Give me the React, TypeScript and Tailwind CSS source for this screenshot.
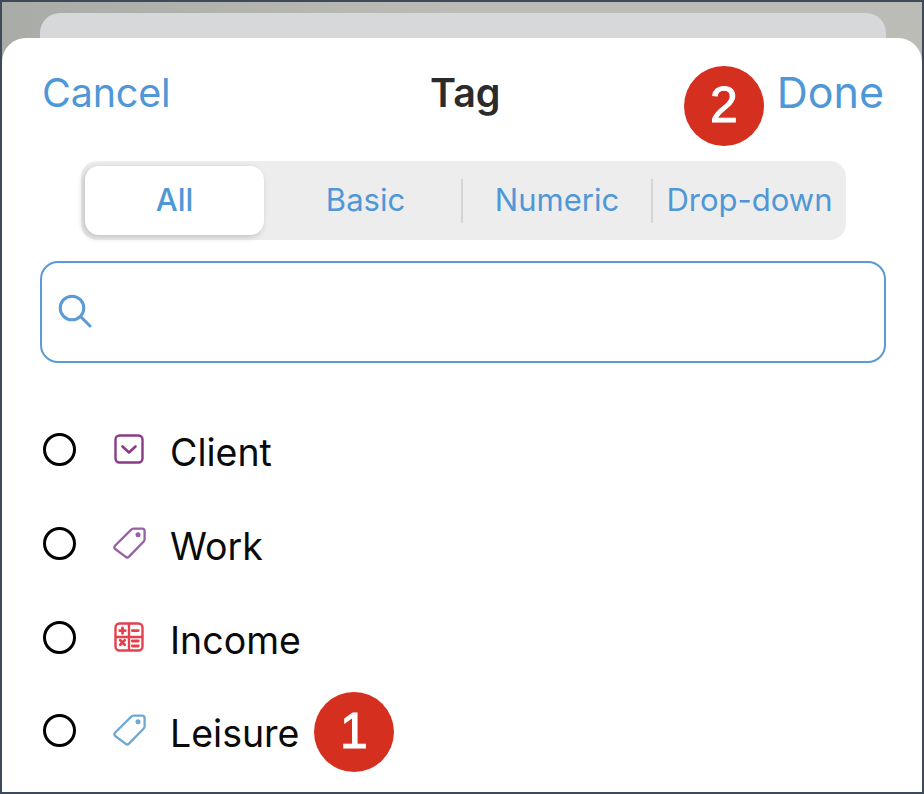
const BLUE = 'text-[#4f97d7]'

function ChevronBoxIcon() {
  return (
    <svg width="30" height="30" viewBox="0 0 30 30" fill="none" stroke="#8a3b86" strokeWidth="2.4" strokeLinecap="round" strokeLinejoin="round">
      <rect x="1.5" y="1.5" width="27" height="27" rx="4" />
      <path d="M8.5 12.5l6.5 6 6.5-6" strokeWidth="2.6" />
    </svg>
  )
}

function TagIcon({ color }: { color: string }) {
  return (
    <svg width="34" height="34" viewBox="0 0 34 34" fill="none" className="-ml-[1px]">
      <path
        d="M2.2 19.5L18 3.9c.7-.7 1.5-1.2 2.4-1.2H29c1.5 0 2.6 1.1 2.6 2.6v8c0 1-.4 1.8-1.1 2.5L16 30.6c-1.1 1-2.6 1-3.6 0L2.2 23c-1-1-1-2.5 0-3.5z"
        stroke={color}
        strokeWidth="2.3"
        strokeLinejoin="round"
      />
      <circle cx="25" cy="8.8" r="2.5" fill={color} />
    </svg>
  )
}

function CalculatorIcon() {
  return (
    <svg width="30" height="30" viewBox="0 0 30 30" fill="none" stroke="#e5404f" strokeWidth="2.4" strokeLinecap="round">
      <rect x="1.5" y="1.5" width="27" height="27" rx="4" />
      <path d="M15 2v26M2 15h26" />
      <path d="M8.5 5.8v5.6M5.7 8.6h5.6M18.3 8.6h6" strokeWidth="2.8" />
      <path d="M6.3 18.3l4.4 4.4M10.7 18.3l-4.4 4.4M18.3 19h6M18.3 24h6" strokeWidth="2.8" />
    </svg>
  )
}

function RowItem({ label, icon, className }: { label: string; icon: React.ReactNode; className: string }) {
  return (
    <div className={`flex items-center ${className}`}>
      <div className="ml-[41px] w-[33px] h-[33px] rounded-full border-[3.5px] border-black shrink-0 -mt-[7px]" />
      <div className="ml-[38px] w-[34px] h-[34px] flex items-center justify-start shrink-0 -mt-[9px]">{icon}</div>
      <span className="ml-[22px] text-[37.5px] leading-[46px] text-[#0a0a0a]">{label}</span>
    </div>
  )
}

function Badge({ n, className }: { n: string; className: string }) {
  return (
    <div
      className={`absolute w-[80px] h-[80px] rounded-full bg-[#d52f20] text-white flex items-center justify-center text-[50px] pb-[1px] font-['Liberation_Sans',sans-serif] [-webkit-text-stroke:1px_white] ${className}`}
    >
      {n}
    </div>
  )
}

export default function App() {
  return (
    <div className="relative w-[924px] h-[794px] overflow-hidden bg-[#3e4a58] p-[2px] font-['Inter',sans-serif]">
      <div className="relative h-full flex flex-col bg-gradient-to-r from-[#a9aba6] via-[#bbbcb6] to-[#bbbcb6] overflow-hidden">
        {/* Card behind the sheet */}
        <div className="ml-[38px] mr-[36px] mt-[11px] h-[50px] -mb-[25px] rounded-t-[20px] bg-[#d7d8da] shrink-0" />

        {/* Sheet */}
        <div className="relative flex-1 bg-white rounded-t-[24px] flex flex-col">
          <div className="flex items-center justify-between pl-[40px] pr-[38px] pt-[30px]">
            <span className={`text-[39.5px] leading-[50px] tracking-[-0.2px] ${BLUE}`}>Cancel</span>
            <span className="absolute left-[428px] text-[39.5px] leading-[50px] font-semibold text-[#2b2b2b]">Tag</span>
            <span className={`text-[43px] leading-[50px] -mt-[2px] ${BLUE}`}>Done</span>
          </div>

          {/* Segmented control */}
          <div className="mt-[43px] ml-[79px] mr-[76px] h-[79px] rounded-[16px] bg-[#ededee] flex items-center text-[31px] text-[#4f97d7]">
            <div className="ml-[4px] w-[179px] h-[69px] rounded-[14px] bg-white shadow-[-2px_2px_6px_rgba(0,0,0,0.2)] flex items-center justify-center font-medium">
              All
            </div>
            <div className="w-[197px] flex items-center justify-center pl-[6px]">Basic</div>
            <div className="w-[2px] h-[44px] bg-[#d5d5d6]" />
            <div className="w-[188px] flex items-center justify-center">Numeric</div>
            <div className="w-[2px] h-[44px] bg-[#d5d5d6]" />
            <div className="flex-1 flex items-center justify-center">Drop-down</div>
          </div>

          {/* Search */}
          <div className="mt-[21px] ml-[38px] mr-[36px] h-[102px] rounded-[18px] border-[2.5px] border-[#5b9bd5] flex items-center pl-[15.5px] shrink-0">
            <svg width="36" height="36" viewBox="0 0 36 36" fill="none" stroke="#5b9bd5" strokeWidth="3" strokeLinecap="round">
              <circle cx="14" cy="14" r="11.8" />
              <path d="M23 23l9 9" />
            </svg>
          </div>

          <RowItem label="Client" icon={<ChevronBoxIcon />} className="mt-[67px]" />
          <RowItem label="Work" icon={<TagIcon color="#9560a8" />} className="mt-[48px]" />
          <RowItem label="Income" icon={<CalculatorIcon />} className="mt-[48px]" />
          <RowItem label="Leisure" icon={<TagIcon color="#6fa8d1" />} className="mt-[47px]" />
        </div>

        <Badge n="1" className="left-[312px] top-[690px]" />
        <Badge n="2" className="left-[682px] top-[64px]" />
      </div>
    </div>
  )
}
